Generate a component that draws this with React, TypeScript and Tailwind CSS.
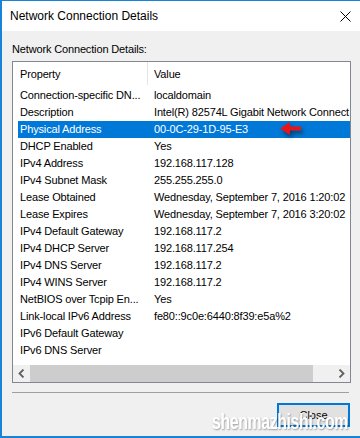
import React from "react";

const rows: [string, string][] = [
  ["Connection-specific DN...", "localdomain"],
  ["Description", "Intel(R) 82574L Gigabit Network Connect"],
  ["Physical Address", "00-0C-29-1D-95-E3"],
  ["DHCP Enabled", "Yes"],
  ["IPv4 Address", "192.168.117.128"],
  ["IPv4 Subnet Mask", "255.255.255.0"],
  ["Lease Obtained", "Wednesday, September 7, 2016 1:20:02"],
  ["Lease Expires", "Wednesday, September 7, 2016 3:20:02"],
  ["IPv4 Default Gateway", "192.168.117.2"],
  ["IPv4 DHCP Server", "192.168.117.254"],
  ["IPv4 DNS Server", "192.168.117.2"],
  ["IPv4 WINS Server", "192.168.117.2"],
  ["NetBIOS over Tcpip En...", "Yes"],
  ["Link-local IPv6 Address", "fe80::9c0e:6440:8f39:e5a%2"],
  ["IPv6 Default Gateway", ""],
  ["IPv6 DNS Server", ""],
];

export default function App() {
  return (
    <div className="relative w-[360px] h-[438px] flex flex-col bg-[#f0f0f0] border-t border-l-2 border-b-2 border-[#1883d7] font-['Liberation_Sans',Arial,sans-serif] text-black overflow-hidden">
      {/* title bar */}
      <div className="h-[30px] shrink-0 bg-white flex items-center justify-between pl-[8px] pr-[8px]">
        <span className="text-[12px] leading-none">Network Connection Details</span>
        <svg width="11" height="11" viewBox="0 0 11 11" className="mr-[1px]">
          <path d="M0.5 0.5 L10.5 10.5 M10.5 0.5 L0.5 10.5" stroke="#000" strokeWidth="1" />
        </svg>
      </div>

      {/* body */}
      <div className="flex flex-col px-[10px] pt-[12px]">
        <div className="text-[11px] leading-[13px] mb-[5px] tracking-[-0.15px]">Network Connection Details:</div>

        {/* list view */}
        <div className="w-[339px] h-[322px] border border-[#828790] bg-white flex flex-col">
          <div className="h-[25px] flex items-center text-[11px] pl-[5px] tracking-[-0.15px]">
            <div className="w-[129px] pl-[2px]">Property</div>
            <div className="w-px h-[23px] self-start bg-[#e5e5e5]" />
            <div className="pl-[6px]">Value</div>
          </div>
          <div className="flex flex-col h-[278px]">
            {rows.map(([k, v], i) => (
              <div
                key={k}
                className={
                  "ml-[5px] h-[17px] flex items-center text-[11px] leading-[17px] tracking-[-0.15px] whitespace-nowrap overflow-hidden " +
                  (i === 2 ? "bg-[#0078d7] text-white" : "")
                }
              >
                <div className="w-[129px] shrink-0 pl-[2px]">{k}</div>
                <div className="pl-[7px]">{v}</div>
              </div>
            ))}
          </div>
          {/* horizontal scrollbar */}
          <div className="h-[17px] flex items-center bg-[#f0f0f0]">
            <div className="w-[17px] h-[17px] flex items-center justify-center">
              <svg width="7" height="9" viewBox="0 0 7 9">
                <path d="M5.5 0.5 L1.5 4.5 L5.5 8.5" stroke="#606060" strokeWidth="1.8" fill="none" />
              </svg>
            </div>
            <div className="w-[283px] h-[17px] bg-[#cdcdcd]" />
            <div className="flex-1" />
            <div className="w-[17px] h-[17px] flex items-center justify-center">
              <svg width="7" height="9" viewBox="0 0 7 9">
                <path d="M1.5 0.5 L5.5 4.5 L1.5 8.5" stroke="#606060" strokeWidth="1.8" fill="none" />
              </svg>
            </div>
          </div>
        </div>

        {/* separator */}
        <div className="mt-[9px] w-[337px] h-px bg-[#a0a0a0]" />

        {/* buttons */}
        <div className="flex justify-end mt-[10px]">
          <button className="w-[73px] h-[24px] bg-[#e1e1e1] border-2 border-[#0078d7] text-[11px] leading-none">
            Close
          </button>
        </div>
      </div>

      {/* red arrow annotation */}
      <svg className="absolute left-[276px] top-[119px] drop-shadow-[2px_3px_2px_rgba(0,0,0,0.5)]" width="26" height="17" viewBox="0 0 26 17">
        <path d="M2 8.5 L12 2 L12 6.5 L23 6.5 L23 10.5 L12 10.5 L12 15 Z" fill="#e8141c" />
      </svg>

      {/* watermark */}
      <div className="absolute left-[210px] top-[410px] text-white font-bold text-[22px] leading-none tracking-[-0.5px] scale-x-[0.72] origin-left [text-shadow:1px_1px_2px_rgba(0,0,0,0.35)] whitespace-nowrap">
        shenmazhishi.com
      </div>
    </div>
  );
}
